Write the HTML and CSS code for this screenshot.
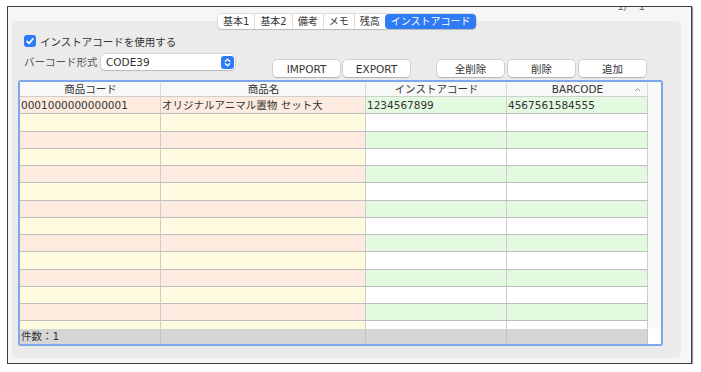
FILE: index.html
```html
<!doctype html>
<html>
<head>
<meta charset="utf-8">
<title>インストアコード</title>
<link rel="stylesheet" href="styles.css">
</head>
<body>

<div class="window">
    <div class="pager">1/&nbsp;&nbsp; 1</div>

    <div class="tabs">
        <span class="tab">基本1</span>
        <span class="tab">基本2</span>
        <span class="tab">備考</span>
        <span class="tab">メモ</span>
        <span class="tab">残高</span>
        <span class="tab active">インストアコード</span>
    </div>

    <div class="panel">
        <label class="check-row">
            <span class="checkbox">
                <svg width="12" height="12" viewBox="0 0 12 12"><polyline points="3,6.3 5.1,8.4 9,3.8" fill="none" stroke="#fff" stroke-width="1.7" stroke-linecap="round" stroke-linejoin="round"/></svg>
            </span>
            インストアコードを使用する
        </label>

        <div class="toolbar">
            <span class="field-label">バーコード形式</span>
            <div class="select">
                <span>CODE39</span>
                <span class="stepper">
                    <svg width="13" height="13" viewBox="0 0 13 13"><polyline points="4.3,5.3 6.5,3.2 8.7,5.3" fill="none" stroke="#fff" stroke-width="1.3" stroke-linecap="round" stroke-linejoin="round"/><polyline points="4.3,7.7 6.5,9.8 8.7,7.7" fill="none" stroke="#fff" stroke-width="1.3" stroke-linecap="round" stroke-linejoin="round"/></svg>
                </span>
            </div>
            <div class="actions">
                <button class="btn">IMPORT</button>
                <button class="btn">EXPORT</button>
            </div>
            <div class="actions edit">
                <button class="btn">全削除</button>
                <button class="btn">削除</button>
                <button class="btn">追加</button>
            </div>
        </div>

        <div class="grid">
            <div class="grid-row head">
                <div class="cell">商品コード</div>
                <div class="cell">商品名</div>
                <div class="cell">インストアコード</div>
                <div class="cell sorted">BARCODE
                    <svg class="caret" width="7" height="5" viewBox="0 0 7 5"><polyline points="1,4 3.5,1.5 6,4" fill="none" stroke="#9a9a9a" stroke-width="1"/></svg>
                </div>
                <div class="cell end"></div>
            </div>

            <div class="body">
                <div class="grid-row">
                    <div class="cell a">0001000000000001</div>
                    <div class="cell a">オリジナルアニマル置物 セット大</div>
                    <div class="cell b">1234567899</div>
                    <div class="cell b">4567561584555</div>
                    <div class="cell end"></div>
                </div>
                <div class="grid-row"><div class="cell a"></div><div class="cell a"></div><div class="cell b"></div><div class="cell b"></div><div class="cell end"></div></div>
                <div class="grid-row"><div class="cell a"></div><div class="cell a"></div><div class="cell b"></div><div class="cell b"></div><div class="cell end"></div></div>
                <div class="grid-row"><div class="cell a"></div><div class="cell a"></div><div class="cell b"></div><div class="cell b"></div><div class="cell end"></div></div>
                <div class="grid-row"><div class="cell a"></div><div class="cell a"></div><div class="cell b"></div><div class="cell b"></div><div class="cell end"></div></div>
                <div class="grid-row"><div class="cell a"></div><div class="cell a"></div><div class="cell b"></div><div class="cell b"></div><div class="cell end"></div></div>
                <div class="grid-row"><div class="cell a"></div><div class="cell a"></div><div class="cell b"></div><div class="cell b"></div><div class="cell end"></div></div>
                <div class="grid-row"><div class="cell a"></div><div class="cell a"></div><div class="cell b"></div><div class="cell b"></div><div class="cell end"></div></div>
                <div class="grid-row"><div class="cell a"></div><div class="cell a"></div><div class="cell b"></div><div class="cell b"></div><div class="cell end"></div></div>
                <div class="grid-row"><div class="cell a"></div><div class="cell a"></div><div class="cell b"></div><div class="cell b"></div><div class="cell end"></div></div>
                <div class="grid-row"><div class="cell a"></div><div class="cell a"></div><div class="cell b"></div><div class="cell b"></div><div class="cell end"></div></div>
                <div class="grid-row"><div class="cell a"></div><div class="cell a"></div><div class="cell b"></div><div class="cell b"></div><div class="cell end"></div></div>
                <div class="grid-row"><div class="cell a"></div><div class="cell a"></div><div class="cell b"></div><div class="cell b"></div><div class="cell end"></div></div>
                <div class="grid-row"><div class="cell a"></div><div class="cell a"></div><div class="cell b"></div><div class="cell b"></div><div class="cell end"></div></div>
            </div>

            <div class="grid-row foot">
                <div class="cell">件数：1</div>
                <div class="cell"></div>
                <div class="cell"></div>
                <div class="cell"></div>
                <div class="cell end"></div>
            </div>
        </div>
    </div>
</div>

</body>
</html>
```

FILE: styles.css
```css
* { margin: 0; padding: 0; box-sizing: border-box; }

body {
	background: #fff;
	font-family: "DejaVu Sans", "Noto Sans CJK JP", sans-serif;
	font-size: 10.5px;
	color: #333;
}

.window {
	position: relative;
	width: 685px;
	height: 358px;
	margin: 6px 0 0 7px;
	border: 1px solid #3c3c3c;
	background: #f6f6f6;
	overflow: hidden;
	box-shadow: 1px 1px 1px #9a9a9a;
}

/* page counter, cut by the title bar */
.pager {
	position: absolute;
	top: -7px;
	left: 609px;
	font-size: 11px;
	color: #777;
}

/* segmented tabs */
.tabs {
	position: relative;
	z-index: 1;
	display: flex;
	width: max-content;
	height: 15px;
	margin: 7px 0 0 210px;
	background: #fff;
	border-radius: 4px;
	box-shadow: 0 0 0 0.5px rgba(0,0,0,.2), 0 1px 1px rgba(0,0,0,.12);
	font-size: 10px;
}
.tab {
	padding: 0 5px;
	line-height: 15px;
	border-left: 1px solid #dcdcdc;
}
.tab:first-child { border-left: 0; }
.tab.active {
	background: #2f7bf5;
	color: #fff;
	border-radius: 4px;
	border-left-color: transparent;
}

.panel {
	width: 669px;
	height: 337px;
	margin: -8px 0 0 4px;
	padding: 14px 0 0 6px;
	background: #ebebeb;
	border-radius: 5px;
}

.check-row {
	display: flex;
	align-items: center;
	gap: 4px;
	height: 12px;
	margin-left: 6px;
}
.checkbox {
	display: flex;
	width: 12px;
	height: 12px;
	border-radius: 3px;
	background: #2f7bf5;
}

.toolbar {
	display: flex;
	align-items: flex-start;
	height: 24px;
	margin: 7px 0 0 6px;
}
.field-label {
	width: 77px;
	line-height: 16px;
	color: #555;
}
.select {
	display: flex;
	align-items: center;
	justify-content: space-between;
	width: 134px;
	height: 16px;
	padding: 0 1px 0 5px;
	background: #fff;
	border-radius: 4px;
	box-shadow: 0 0 0 0.5px rgba(0,0,0,.2), 0 1px 1px rgba(0,0,0,.12);
}
.stepper {
	display: flex;
	width: 13px;
	height: 13px;
	border-radius: 3px;
	background: #2f7bf5;
}

.actions {
	display: flex;
	gap: 3px;
	margin: 6px 0 0 38px;
}
.actions.edit {
	gap: 4px;
	margin-left: 27px;
}
.btn {
	width: 67px;
	height: 17px;
	border: 0;
	background: #fff;
	border-radius: 4px;
	box-shadow: 0 0 0 0.5px rgba(0,0,0,.22), 0 1px 1px rgba(0,0,0,.14);
	font: inherit;
	color: #333;
}
.actions:first-child .btn { width: 68px; }

/* table */
.grid {
	width: 645px;
	height: 266px;
	margin-top: 2px;
	border: 2px solid #7ea6ea;
	border-radius: 3px;
	background: #fafafa;
	overflow: hidden;
}
.grid-row {
	display: grid;
	grid-template-columns: 141px 205px 141px 141px 1fr;
}
.cell {
	padding-left: 1px;
	white-space: nowrap;
	overflow: hidden;
	border-right: 1px solid #cdcdcd;
	border-bottom: 1px solid #bdbdbd;
}
.cell.end {
	border: 0;
	background: #fafafa;
}

.head { height: 15px; background: #f8f8f8; }
.head .cell {
	line-height: 14px;
	text-align: center;
	border-color: #dadada;
	border-bottom-color: #cfcfcf;
}
.head .sorted { position: relative; }
.caret {
	position: absolute;
	right: 6px;
	top: 5px;
}

.body { height: 232px; overflow: hidden; }
.body .grid-row { height: 17.25px; }
.body .cell { line-height: 16px; }
.body .grid-row:nth-child(odd) .a { background: #fdebe0; }
.body .grid-row:nth-child(even) .a { background: #fefbe1; }
.body .grid-row:nth-child(odd) .b { background: #e3fae1; }
.body .grid-row:nth-child(even) .b { background: #fff; }

.foot { height: 15px; background: #d6d6d6; }
.foot .cell {
	line-height: 15px;
	border-bottom: 0;
	border-color: #c4c4c4;
}
.foot .cell.end { background: #fff; }
```
